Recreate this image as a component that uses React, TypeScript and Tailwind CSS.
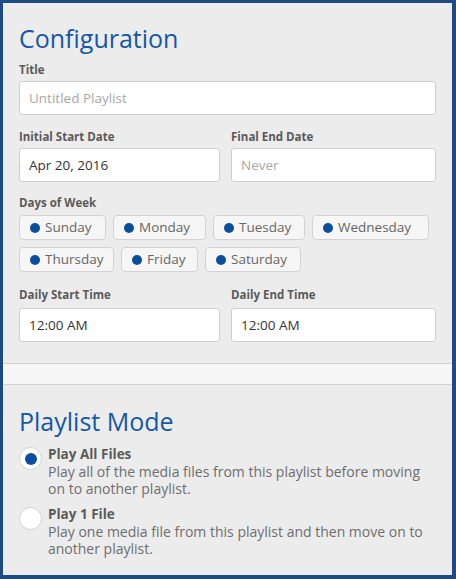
import React from "react";

const days: { name: string; w: string }[] = [
  { name: "Sunday", w: "w-[87px]" },
  { name: "Monday", w: "w-[93px]" },
  { name: "Tuesday", w: "w-[92px]" },
  { name: "Wednesday", w: "w-[117px]" },
  { name: "Thursday", w: "w-[95px]" },
  { name: "Friday", w: "w-[77px]" },
  { name: "Saturday", w: "w-[96px]" },
];

function Label({ children, mb = "mb-[3px]" }: { children: React.ReactNode; mb?: string }) {
  return (
    <div className={`text-[11.5px] leading-[16px] font-bold text-[#5a5a5a] ${mb}`}>
      {children}
    </div>
  );
}

function Input({ value, placeholder }: { value?: string; placeholder?: string }) {
  return (
    <div className="h-[34px] bg-white border border-[#cfcfcf] rounded-[3px] px-[9px] flex items-center text-[13.5px]">
      {value ? (
        <span className="text-[#333]">{value}</span>
      ) : (
        <span className="text-[#a8a8a8]">{placeholder}</span>
      )}
    </div>
  );
}

function Radio({ checked, title, desc }: { checked: boolean; title: string; desc: string }) {
  return (
    <div className="flex gap-[6px]">
      <div className="w-[23px] h-[23px] mt-[1px] rounded-full bg-white border border-[#d2d2d2] flex items-center justify-center shrink-0">
        {checked && <div className="w-[12px] h-[12px] rounded-full bg-[#0b4e9e]" />}
      </div>
      <div className="leading-[17px] w-[388px]">
        <div className="text-[13.5px] font-bold text-[#5a5a5a]">{title}</div>
        <div className="text-[14px] text-[#6e6e6e]">{desc}</div>
      </div>
    </div>
  );
}

export default function App() {
  return (
    <div
      className="w-[456px] h-[579px] bg-[#ececec] border-l-[3px] border-t-[3px] border-r-4 border-b-4 border-[#1f4b85] flex flex-col"
      style={{ fontFamily: '"Open Sans", "Liberation Sans", sans-serif' }}
    >
      <div className="px-4 pt-[20px] pb-[21px]">
        <h1 className="text-[25px] leading-[30px] text-[#1557a8] mb-[9px]">Configuration</h1>
        <Label>Title</Label>
        <Input placeholder="Untitled Playlist" />
        <div className="grid grid-cols-[201px_205px] gap-x-[11px] mt-[14px]">
          <div>
            <Label>Initial Start Date</Label>
            <Input value="Apr 20, 2016" />
          </div>
          <div>
            <Label>Final End Date</Label>
            <Input placeholder="Never" />
          </div>
        </div>
        <div className="mt-[13px]">
          <Label mb="mb-[4px]">Days of Week</Label>
          <div className="flex flex-wrap gap-[7px] w-[420px]">
            {days.map((d) => (
              <div
                key={d.name}
                className={`${d.w} h-[25px] bg-[#f6f6f6] border border-[#d3d3d3] rounded-[4px] flex items-center pl-[10px] gap-[5px] text-[13.5px] text-[#666]`}
              >
                <div className="w-[10px] h-[10px] rounded-full bg-[#0b4e9e]" />
                <span>{d.name}</span>
              </div>
            ))}
          </div>
        </div>
        <div className="grid grid-cols-[201px_205px] gap-x-[11px] mt-[15px]">
          <div>
            <Label mb="mb-[5px]">Daily Start Time</Label>
            <Input value="12:00 AM" />
          </div>
          <div>
            <Label mb="mb-[5px]">Daily End Time</Label>
            <Input value="12:00 AM" />
          </div>
        </div>
      </div>
      <div className="h-[22px] bg-[#f7f7f7] border-y border-[#d3d3d3]" />
      <div className="px-4 pt-[21px]">
        <h2 className="text-[25px] leading-[30px] text-[#1557a8] mb-[10px]">Playlist Mode</h2>
        <div className="flex flex-col gap-[9px]">
          <Radio
            checked
            title="Play All Files"
            desc="Play all of the media files from this playlist before moving on to another playlist."
          />
          <Radio
            checked={false}
            title="Play 1 File"
            desc="Play one media file from this playlist and then move on to another playlist."
          />
        </div>
      </div>
    </div>
  );
}
